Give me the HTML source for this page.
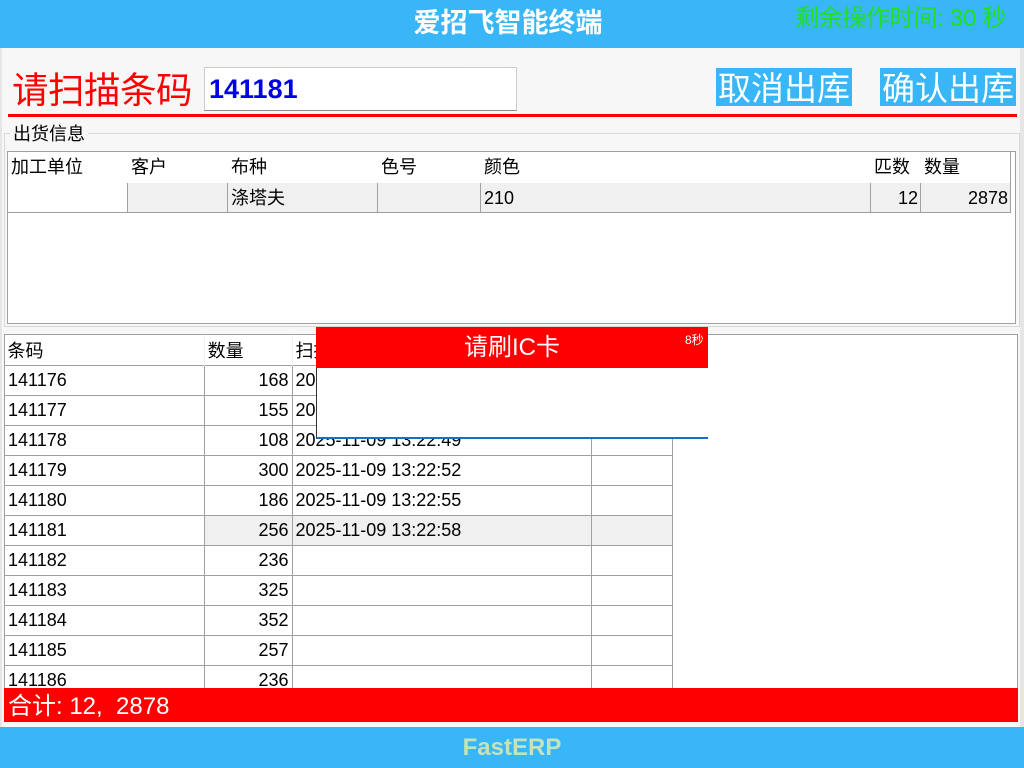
<!DOCTYPE html>
<html><head><meta charset="utf-8"><style>
*{margin:0;padding:0;box-sizing:border-box}
body{width:1024px;height:768px;overflow:hidden;background:#f7f7f7;font-family:"Liberation Sans","Noto Sans CJK SC",sans-serif;position:relative;color:#000}
.a{position:absolute}
.hd{left:0;top:0;width:1024px;height:48px;background:#38b6f8}
.ft{left:0;top:727px;width:1024px;height:41px;background:#38b6f8;color:#c5e3b8;font-weight:bold;font-size:24px;text-align:center;line-height:41px}
.c{position:absolute;font-size:18px;line-height:30px;white-space:nowrap;overflow:hidden}
.r{text-align:right}
table{border-collapse:collapse;position:absolute}
td{font-size:18px;height:30px;padding:0 3px;white-space:nowrap;border:1px solid #a0a0a0;vertical-align:middle}
tr.h td{border:0;border-right:1px solid #f0f0f0}
</style></head><body>
<div class="a hd"></div>
<div class="a" style="left:0;top:4px;width:1016px;text-align:center;color:#fff;font-weight:bold;font-size:27px;line-height:38px">爱招飞智能终端</div>
<div class="a" style="left:795px;top:3px;color:#1ee21e;font-size:24px;line-height:32px;letter-spacing:-0.3px">剩余操作时间: 30 秒</div>
<div class="a" style="left:0;top:48px;width:1024px;height:679px;background:#f7f7f7;border-left:2px solid #e6e6e6;border-right:4px solid #e6e6e6"></div>
<div class="a" style="left:460px;top:60px;color:#fff;font-size:22px">科技</div>
<div class="a" style="left:12px;top:68px;color:#f00;font-size:36.5px;line-height:46px;letter-spacing:-0.5px">请扫描条码</div>
<div class="a" style="left:204px;top:67px;width:313px;height:44px;background:#fff;border:1px solid #ccc;border-bottom:1px solid #888;color:#0000e8;font-weight:bold;font-size:27px;line-height:42px;padding-left:4px">141181</div>
<div class="a" style="left:716px;top:68px;width:136px;height:38px;background:#38b6f8;color:#fff;font-size:33px;line-height:42px;text-align:center;overflow:hidden;white-space:nowrap">取消出库</div>
<div class="a" style="left:880px;top:68px;width:136px;height:38px;background:#38b6f8;color:#fff;font-size:33px;line-height:42px;text-align:center;overflow:hidden;white-space:nowrap">确认出库</div>
<div class="a" style="left:8px;top:114px;width:1009px;height:3px;background:#f00"></div>
<div class="a" style="left:4px;top:133px;width:1016px;height:194px;border:1px solid #d8d8d8"></div>
<div class="a" style="left:10px;top:122px;background:#f7f7f7;font-size:18px;line-height:24px;padding:0 3px">出货信息</div>
<div class="a" style="left:7px;top:151px;width:1009px;height:173px;background:#fff;border:1px solid #a0a0a0"></div>
<div class="c" style="left:11px;top:152px">加工单位</div>
<div class="c" style="left:131px;top:152px">客户</div>
<div class="c" style="left:231px;top:152px">布种</div>
<div class="c" style="left:381px;top:152px">色号</div>
<div class="c" style="left:484px;top:152px">颜色</div>
<div class="c" style="left:874px;top:152px">匹数</div>
<div class="c" style="left:924px;top:152px">数量</div>
<div class="a" style="left:127px;top:183px;width:883px;height:30px;background:#f0f0f0"></div>
<div class="a" style="left:8px;top:212px;width:1002px;height:1px;background:#a0a0a0"></div>
<div class="a" style="left:127px;top:183px;width:1px;height:30px;background:#a0a0a0"></div>
<div class="a" style="left:227px;top:183px;width:1px;height:30px;background:#a0a0a0"></div>
<div class="a" style="left:377px;top:183px;width:1px;height:30px;background:#a0a0a0"></div>
<div class="a" style="left:480px;top:183px;width:1px;height:30px;background:#a0a0a0"></div>
<div class="a" style="left:870px;top:183px;width:1px;height:30px;background:#a0a0a0"></div>
<div class="a" style="left:920px;top:183px;width:1px;height:30px;background:#a0a0a0"></div>
<div class="a" style="left:1010px;top:152px;width:1px;height:61px;background:#a0a0a0"></div>
<div class="c" style="left:231px;top:183px">涤塔夫</div>
<div class="c" style="left:484px;top:183px">210</div>
<div class="c r" style="left:870px;top:183px;width:48px">12</div>
<div class="c r" style="left:920px;top:183px;width:88px">2878</div>

<div class="a" style="left:4px;top:334px;width:1014px;height:355px;background:#fff;border:1px solid #a0a0a0"></div>
<table style="left:4px;top:335px;width:669px">
<colgroup><col style="width:200px"><col style="width:88px"><col style="width:300px"><col style="width:81px"></colgroup>
<tr class="h"><td>条码</td><td>数量</td><td>扫描时间</td><td></td></tr>
<tr><td>141176</td><td class="r">168</td><td>2025-11-09 13:22:43</td><td></td></tr>
<tr><td>141177</td><td class="r">155</td><td>2025-11-09 13:22:46</td><td></td></tr>
<tr><td>141178</td><td class="r">108</td><td>2025-11-09 13:22:49</td><td></td></tr>
<tr><td>141179</td><td class="r">300</td><td>2025-11-09 13:22:52</td><td></td></tr>
<tr><td>141180</td><td class="r">186</td><td>2025-11-09 13:22:55</td><td></td></tr>
<tr><td>141181</td><td class="r" style="background:#f0f0f0">256</td><td style="background:#f0f0f0">2025-11-09 13:22:58</td><td style="background:#f0f0f0"></td></tr>
<tr><td>141182</td><td class="r">236</td><td></td><td></td></tr>
<tr><td>141183</td><td class="r">325</td><td></td><td></td></tr>
<tr><td>141184</td><td class="r">352</td><td></td><td></td></tr>
<tr><td>141185</td><td class="r">257</td><td></td><td></td></tr>
<tr><td>141186</td><td class="r">236</td><td></td><td></td></tr>
</table>
<div class="a" style="left:4px;top:688px;width:1014px;height:34px;background:#f00;color:#fff;font-size:24px;line-height:38px;padding-left:4px">合计: 12,&nbsp;&nbsp;2878</div>

<div class="a" style="left:316px;top:327px;width:392px;height:112px;background:#fff;border-left:1px solid #333;border-bottom:2px solid #1a6fc4"></div>
<div class="a" style="left:316px;top:327px;width:392px;height:41px;background:#f00;color:#fff;font-size:24px;line-height:41px;text-align:center">请刷IC卡</div>
<div class="a" style="left:685px;top:331px;color:#fff;font-size:12px">8秒</div>
<div class="a ft">FastERP</div>
</body></html>
